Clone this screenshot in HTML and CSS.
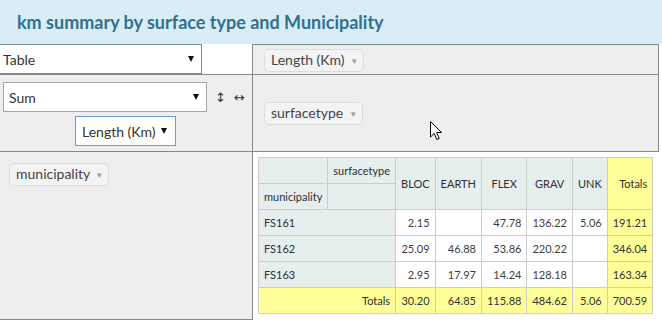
FILE: index.html
```html
<!DOCTYPE html>
<html lang="en">
<head>
    <meta charset="UTF-8">
    <meta name="viewport" content="width=device-width, initial-scale=1.0">
    <title>km summary by surface type and Municipality</title>
    <link rel="stylesheet" href="styles.css">
</head>
<body>
    <div class="panel-heading">
        <h1>km summary by surface type and Municipality</h1>
    </div>
    <div class="pvt-ui">
        <div class="cell renderer">
            <div class="fake-select renderer-select">Table <span class="caret"></span></div>
        </div>
        <div class="cell vals-cols">
            <span class="pvt-attr">Length (Km) <span class="tri">&#9662;</span></span>
        </div>
        <div class="cell aggregator">
            <div class="agg-row">
                <div class="fake-select agg-select">Sum <span class="caret"></span></div>
                <span class="sorter">&#8597;</span>
                <span class="sorter">&#8596;</span>
            </div>
            <div class="fake-select attr-select">Length (Km) <span class="caret"></span></div>
        </div>
        <div class="cell cols">
            <span class="pvt-attr">surfacetype <span class="tri">&#9662;</span></span>
        </div>
        <div class="cell rows">
            <span class="pvt-attr">municipality <span class="tri">&#9662;</span></span>
        </div>
        <div class="cell output">
            <table class="pvt-table">
                <thead>
                    <tr>
                        <th></th>
                        <th class="axis-label">surfacetype</th>
                        <th class="col-label" rowspan="2">BLOC</th>
                        <th class="col-label" rowspan="2">EARTH</th>
                        <th class="col-label" rowspan="2">FLEX</th>
                        <th class="col-label" rowspan="2">GRAV</th>
                        <th class="col-label" rowspan="2">UNK</th>
                        <th class="total-label" rowspan="2">Totals</th>
                    </tr>
                    <tr>
                        <th class="axis-label">municipality</th>
                        <th></th>
                    </tr>
                </thead>
                <tbody>
                    <tr>
                        <th class="row-label" colspan="2">FS161</th>
                        <td>2.15</td><td></td><td>47.78</td><td>136.22</td><td>5.06</td>
                        <td class="total">191.21</td>
                    </tr>
                    <tr>
                        <th class="row-label" colspan="2">FS162</th>
                        <td>25.09</td><td>46.88</td><td>53.86</td><td>220.22</td><td></td>
                        <td class="total">346.04</td>
                    </tr>
                    <tr>
                        <th class="row-label" colspan="2">FS163</th>
                        <td>2.95</td><td>17.97</td><td>14.24</td><td>128.18</td><td></td>
                        <td class="total">163.34</td>
                    </tr>
                    <tr>
                        <th class="total-label grand" colspan="2">Totals</th>
                        <td class="total">30.20</td><td class="total">64.85</td><td class="total">115.88</td>
                        <td class="total">484.62</td><td class="total">5.06</td><td class="total">700.59</td>
                    </tr>
                </tbody>
            </table>
        </div>
        <svg class="cursor" width="13" height="20" viewBox="0 0 13 20">
            <path d="M0.5 0.5 L0.5 16 L4.2 12.4 L6.8 18.5 L9.2 17.5 L6.6 11.5 L11.5 11.5 Z" fill="#fff" stroke="#000" stroke-width="1"/>
        </svg>
    </div>
</body>
</html>
```

FILE: styles.css
```css
body { margin: 0; font-family: Lato, "Open Sans", sans-serif; font-size: 14px; color: #333; background: #fff; }
.panel-heading { background: #d9edf7; height: 44px; padding: 0 17px; box-sizing: border-box; display: flex; align-items: center; }
.panel-heading h1 { margin: 0; font-size: 18px; font-weight: bold; color: #31708f; }

.pvt-ui { position: relative; display: grid; grid-template-columns: 252px 407px; grid-template-rows: 31px 77px auto; }
.cell { box-sizing: border-box; background: #eee; border-bottom: 1px solid #888; }
.renderer { background: #fff; }
.vals-cols, .cols { border-left: 1px solid #888; border-right: 1px solid #888; }
.vals-cols { border-top: 1px solid #888; padding: 4px 0 0 11px; }
.cols { display: flex; align-items: center; padding-left: 11px; }
.rows { padding: 11px 0 0 9px; }
.output { background: #fff; border-left: 1px solid #888; border-bottom: none; padding: 5px 5px 6px 5px; }
.aggregator { padding: 7px 0 0 3px; display: flex; flex-direction: column; }

.fake-select { box-sizing: border-box; height: 30px; border: 1px solid #a6a6a6; background: #fff; display: flex; align-items: center; justify-content: space-between; padding: 0 7px 0 4px; color: #333; }
.renderer-select { width: 202px; border-color: #888; border-left: none; padding-left: 3px; }
.agg-select { width: 204px; padding-left: 5px; }
.attr-select { width: 101px; align-self: center; margin: 4px 0 0 -4px; border-color: #6a9be0; padding-left: 6px; padding-right: 8px; }
.caret { width: 0; height: 0; border-left: 3px solid transparent; border-right: 3px solid transparent; border-top: 6px solid #111; }
.agg-row { display: flex; align-items: center; }
.sorter { font-family: "DejaVu Sans", sans-serif; font-size: 13px; color: #333; margin-left: 8px; }

.pvt-attr { display: inline-block; background: #f3f3f3; border: 1px solid #dcdcdc; border-radius: 5px; padding: 1px 6px 1px 6px; line-height: 18px; color: #444; white-space: nowrap; }
.pvt-attr .tri { font-size: 9px; color: #999; margin-left: 4px; vertical-align: 1px; }

.pvt-table { border-collapse: collapse; font-size: 11px; line-height: 15px; }
.pvt-table th { background: #e6eeee; border: 1px solid #cdcdcd; padding: 5px; font-weight: normal; color: #2f2f2f; text-align: left; }
.pvt-table td { background: #fff; border: 1px solid #cdcdcd; padding: 5px; color: #3d3d3d; text-align: right; vertical-align: top; }
.pvt-table .col-label { text-align: center; }
.pvt-table .total-label { text-align: right; background: #ffff99; }
.pvt-table .axis-label { vertical-align: middle; }
.pvt-table .row-label { vertical-align: top; }
.pvt-table .total { background: #ffff99; color: #333; }

.cursor { position: absolute; left: 430px; top: 77px; }
```
